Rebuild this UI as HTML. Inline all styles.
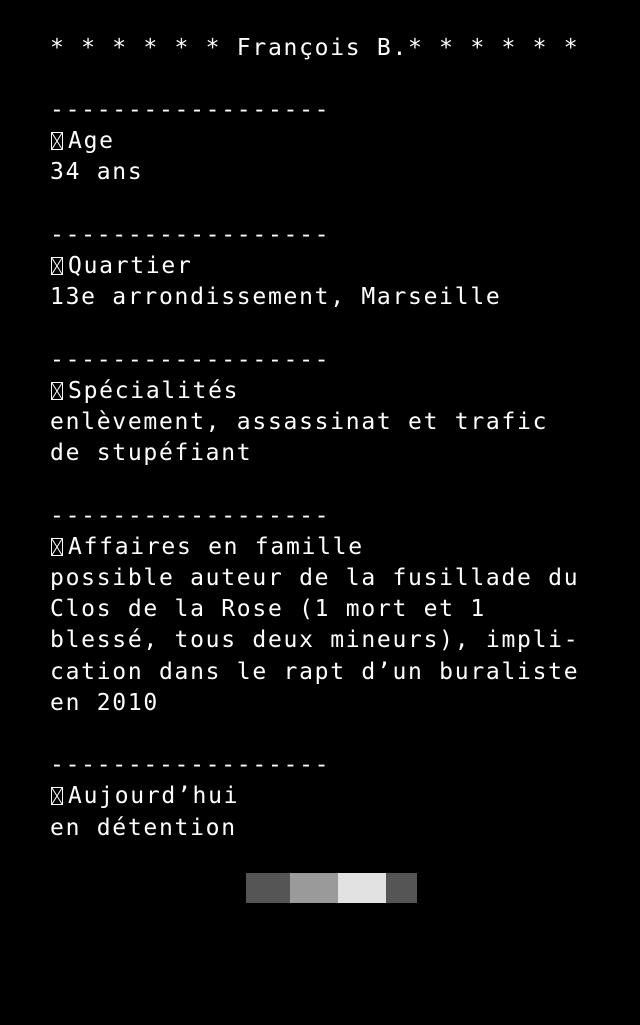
<!DOCTYPE html>
<html><head><meta charset="utf-8"><style>
html,body{margin:0;padding:0;background:#000;width:640px;height:1025px;overflow:hidden}
pre{margin:0;position:absolute;left:50px;top:32.5px;color:#fff;font-family:"DejaVu Sans Mono","Liberation Mono",monospace;font-size:23px;letter-spacing:1.72px;line-height:31.2px}
.b{display:inline-block;width:18px;height:17px;vertical-align:-1px;position:relative}
.b svg{position:absolute;left:1px;top:0}
.bar{position:absolute;top:873px;height:30px}
</style></head><body>
<pre>* * * * * * François B.* * * * * *

------------------
<span class="b"><svg width="12" height="18"><rect x="0.5" y="0.5" width="11" height="17" fill="none" stroke="#fff"/><path d="M1 1L11 17M11 1L1 17" stroke="#fff"/></svg></span>Age
34 ans

------------------
<span class="b"><svg width="12" height="18"><rect x="0.5" y="0.5" width="11" height="17" fill="none" stroke="#fff"/><path d="M1 1L11 17M11 1L1 17" stroke="#fff"/></svg></span>Quartier
13e arrondissement, Marseille

------------------
<span class="b"><svg width="12" height="18"><rect x="0.5" y="0.5" width="11" height="17" fill="none" stroke="#fff"/><path d="M1 1L11 17M11 1L1 17" stroke="#fff"/></svg></span>Spécialités
enlèvement, assassinat et trafic
de stupéfiant

------------------
<span class="b"><svg width="12" height="18"><rect x="0.5" y="0.5" width="11" height="17" fill="none" stroke="#fff"/><path d="M1 1L11 17M11 1L1 17" stroke="#fff"/></svg></span>Affaires en famille
possible auteur de la fusillade du
Clos de la Rose (1 mort et 1
blessé, tous deux mineurs), impli-
cation dans le rapt d’un buraliste
en 2010

------------------
<span class="b"><svg width="12" height="18"><rect x="0.5" y="0.5" width="11" height="17" fill="none" stroke="#fff"/><path d="M1 1L11 17M11 1L1 17" stroke="#fff"/></svg></span>Aujourd’hui
en détention</pre>
<div class="bar" style="left:246px;width:44px;background:#555"></div>
<div class="bar" style="left:290px;width:48px;background:#9a9a9a"></div>
<div class="bar" style="left:338px;width:48px;background:#e2e2e2"></div>
<div class="bar" style="left:386px;width:31px;background:#555"></div>
</body></html>
